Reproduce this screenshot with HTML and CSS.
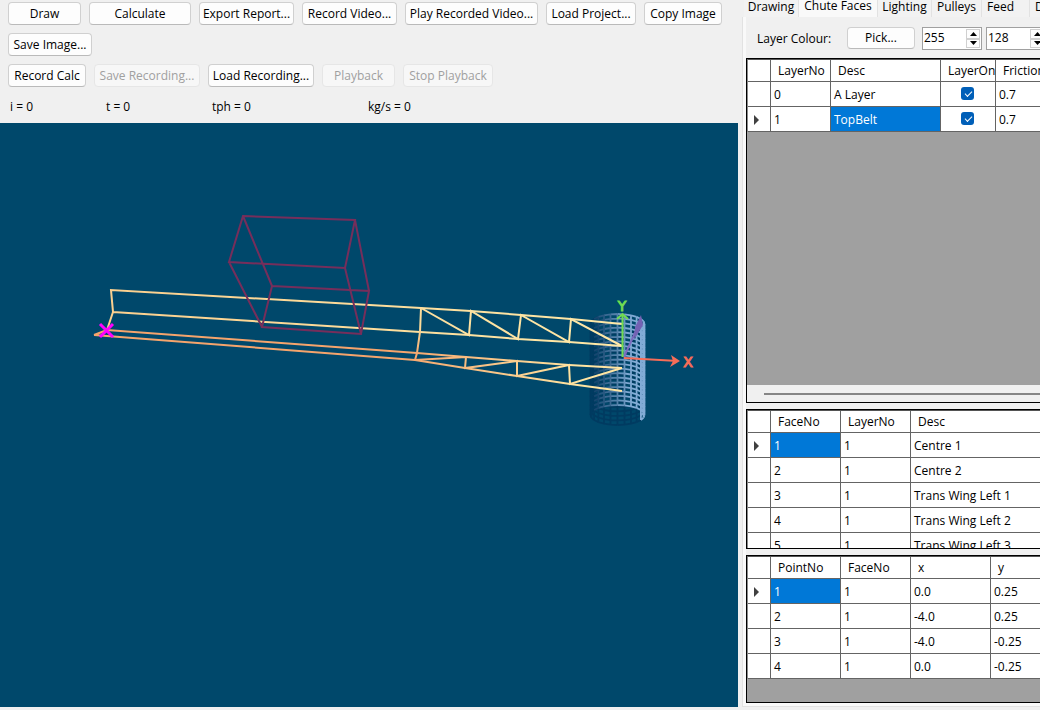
FILE: index.html
```
<!DOCTYPE html>
<html lang="en">
<head>
  <meta charset="UTF-8">
  <title>Chute Faces</title>
  <link rel="stylesheet" href="styles.css">
</head>
<body>
<main class="app">
  <section class="viewer">
    <div class="toolbar">
      <div class="row">
        <button class="btn w-draw" type="button">Draw</button>
        <button class="btn w-calculate" type="button">Calculate</button>
        <button class="btn w-wide" type="button">Export Report...</button>
        <button class="btn w-wide" type="button">Record Video...</button>
        <button class="btn w-play" type="button">Play Recorded Video...</button>
        <button class="btn w-load" type="button">Load Project...</button>
        <button class="btn w-copy" type="button">Copy Image</button>
        <button class="btn w-save" type="button">Save Image...</button>
      </div>
      <div class="row">
        <button class="btn w-copy" type="button">Record Calc</button>
        <button class="btn w-rec" type="button" disabled>Save Recording...</button>
        <button class="btn w-rec" type="button">Load Recording...</button>
        <button class="btn w-draw" type="button" disabled>Playback</button>
        <button class="btn w-load" type="button" disabled>Stop Playback</button>
      </div>
      <div class="stats">
        <span>i = 0</span>
        <span>t = 0</span>
        <span>tph = 0</span>
        <span>kg/s = 0</span>
      </div>
    </div>

    <div class="scene">
      <svg viewBox="0 123 738 584" preserveAspectRatio="xMinYMin meet" role="img" aria-label="3D view of the belt">
        <defs>
          <linearGradient id="upper" gradientUnits="userSpaceOnUse" x1="110" y1="0" x2="622" y2="0">
            <stop offset="0" stop-color="#fbd08f"/>
            <stop offset="1" stop-color="#ffe9a8"/>
          </linearGradient>
          <linearGradient id="lower" gradientUnits="userSpaceOnUse" x1="400" y1="0" x2="580" y2="0">
            <stop offset="0" stop-color="#f5a46c"/>
            <stop offset="1" stop-color="#ffe5a2"/>
          </linearGradient>
          <linearGradient id="edge" gradientUnits="userSpaceOnUse" x1="0" y1="325" x2="0" y2="358">
            <stop offset="0" stop-color="#fcdc9a"/>
            <stop offset="1" stop-color="#f5a46c"/>
          </linearGradient>
        </defs>

        <!-- pulley mesh, filled in by scene.js -->
        <g id="pulley" class="pulley"></g>

        <!-- belt -->
        <g class="line">
          <path stroke="url(#upper)" d="M107 330 113 312 111 290 421 308 471 311 521 315 571 319 622 324M113 312 420 332 469 335 518 339 569 342 622 346"/>
          <path stroke="url(#upper)" d="M421 308 469 335 471 311 518 339 521 315 569 342 571 319 622 346"/>
          <path stroke="url(#edge)" d="M421 308 420 332 417 353 415 360"/>
          <path stroke="url(#lower)" d="M94 335 107 330 417 353 466 357 517 361 569 365 622 368M94 335 415 360 465 368 517 376 570 384 622 391"/>
          <path stroke="url(#lower)" d="M415 360 466 357 465 368 517 361 517 376 569 365 570 384 622 368"/>
        </g>

        <!-- feed box -->
        <path class="line feed" d="M243 216 355 220 345 268 229 262ZM272 286 369 291 361 334 262 327ZM243 216 272 286M355 220 369 291M345 268 361 334M229 262 262 327"/>

        <!-- origin marker -->
        <path class="marker" d="M100 324 113 337M113 324 100 337"/>

        <!-- axes -->
        <path class="axis-z" d="M624 357 639 324"/>
        <path class="axis-z-head" d="M641 315 643 325 634 340 635 327Z"/>
        <path class="axis-y" d="M622.500 357V315M617 319 622.500 314 628 319"/>
        <path class="axis-x" d="M624 358 678 361"/>
        <path class="axis-x-head" d="M671 355 680 361 670 367 673 361Z"/>
        <text class="axis-name name-y" x="622" y="311">Y</text>
        <text class="axis-name name-x" x="688" y="367">X</text>
      </svg>
    </div>
  </section>

  <section class="side">
    <div class="tabs" role="tablist">
      <button class="tab t-drawing" type="button" role="tab">Drawing</button>
      <button class="tab t-faces active" type="button" role="tab" aria-selected="true">Chute Faces</button>
      <button class="tab t-lighting" type="button" role="tab">Lighting</button>
      <button class="tab t-short" type="button" role="tab">Pulleys</button>
      <button class="tab t-feed" type="button" role="tab">Feed</button>
      <button class="tab t-last" type="button" role="tab">D</button>
    </div>

    <div class="page">
      <div class="colour">
        <label class="colour-label" for="red">Layer Colour:</label>
        <button class="btn w-pick" type="button">Pick...</button>
        <div class="spin">
          <input id="red" type="text" value="255">
          <div class="arrows">
            <button type="button" aria-label="Red up"><svg viewBox="0 0 7 4"><path d="M0 4 3.500 0 7 4Z"/></svg></button>
            <button type="button" aria-label="Red down"><svg viewBox="0 0 7 4"><path d="M0 0 3.500 4 7 0Z"/></svg></button>
          </div>
        </div>
        <div class="spin">
          <input type="text" value="128" aria-label="Green">
          <div class="arrows">
            <button type="button" aria-label="Green up"><svg viewBox="0 0 7 4"><path d="M0 4 3.500 0 7 4Z"/></svg></button>
            <button type="button" aria-label="Green down"><svg viewBox="0 0 7 4"><path d="M0 0 3.500 4 7 0Z"/></svg></button>
          </div>
        </div>
      </div>

      <div class="box layers">
        <div class="grid-area">
          <table class="grid">
            <colgroup><col class="c-head"><col class="c-60"><col class="c-110"><col class="c-55"><col class="c-80"></colgroup>
            <thead>
              <tr><th></th><th>LayerNo</th><th>Desc</th><th>LayerOn</th><th>Friction</th></tr>
            </thead>
            <tbody>
              <tr><td></td><td>0</td><td>A Layer</td><td class="check"><input type="checkbox" checked aria-label="A Layer on"></td><td>0.7</td></tr>
              <tr class="current"><td></td><td>1</td><td class="selected">TopBelt</td><td class="check"><input type="checkbox" checked aria-label="TopBelt on"></td><td>0.7</td></tr>
            </tbody>
          </table>
        </div>
        <div class="scrollbar"><div class="thumb"></div></div>
      </div>

      <div class="box faces">
        <table class="grid">
          <colgroup><col class="c-head"><col class="c-70"><col class="c-70"><col class="c-200"></colgroup>
          <thead>
            <tr><th></th><th>FaceNo</th><th>LayerNo</th><th>Desc</th></tr>
          </thead>
          <tbody>
            <tr class="current"><td></td><td class="selected">1</td><td>1</td><td>Centre 1</td></tr>
            <tr><td></td><td>2</td><td>1</td><td>Centre 2</td></tr>
            <tr><td></td><td>3</td><td>1</td><td>Trans Wing Left 1</td></tr>
            <tr><td></td><td>4</td><td>1</td><td>Trans Wing Left 2</td></tr>
            <tr><td></td><td>5</td><td>1</td><td>Trans Wing Left 3</td></tr>
          </tbody>
        </table>
      </div>

      <div class="box points">
        <table class="grid">
          <colgroup><col class="c-head"><col class="c-70"><col class="c-70"><col class="c-80"><col class="c-80"></colgroup>
          <thead>
            <tr><th></th><th>PointNo</th><th>FaceNo</th><th>x</th><th>y</th></tr>
          </thead>
          <tbody>
            <tr class="current"><td></td><td class="selected">1</td><td>1</td><td>0.0</td><td>0.25</td></tr>
            <tr><td></td><td>2</td><td>1</td><td>-4.0</td><td>0.25</td></tr>
            <tr><td></td><td>3</td><td>1</td><td>-4.0</td><td>-0.25</td></tr>
            <tr><td></td><td>4</td><td>1</td><td>0.0</td><td>-0.25</td></tr>
          </tbody>
        </table>
      </div>
    </div>
  </section>
</main>
<script src="scene.js"></script>
</body>
</html>
```
FILE: styles.css
```
* {
  box-sizing: border-box;
}

body {
  margin: 0;
  background: #f0f0f0;
  color: #000;
  font: 12px/16px "Open Sans", "Noto Sans", sans-serif;
}

button,
input {
  font: inherit;
  color: inherit;
}

.app {
  display: flex;
  height: 100vh;
  overflow: hidden;
}

/* left part */
.viewer {
  flex: 1;
  min-width: 0;
  display: flex;
  flex-direction: column;
  padding-bottom: 3px;
}

.toolbar {
  padding: 2px 8px 8px;
}

.row {
  display: flex;
  flex-wrap: wrap;
  gap: 8px;
  margin-bottom: 8px;
}

.btn {
  flex: none;
  height: 23px;
  padding: 0;
  background: #fdfdfd;
  border: 1px solid #d0d0d0;
  border-bottom-color: #bababa;
  border-radius: 4px;
  line-height: 20px;
  white-space: nowrap;
}

.btn:disabled {
  background: #f7f7f7;
  border-color: #e6e6e6;
  color: #a0a0a0;
}

.w-draw { width: 73px; }
.w-calculate { width: 102px; }
.w-wide { width: 95px; }
.w-play { width: 133px; }
.w-load { width: 90px; }
.w-copy { width: 78px; }
.w-save { width: 84px; }
.w-rec { width: 106px; }
.w-pick { width: 68px; }

.stats {
  display: grid;
  grid-template-columns: 96px 106px 156px 1fr;
  padding: 4px 2px 0;
}

.scene {
  flex: 1;
  min-height: 0;
  background: #00486b;
}

.scene svg {
  display: block;
  width: 100%;
  height: 100%;
}

.line {
  fill: none;
  stroke-width: 2;
}

.pulley path {
  fill: none;
  stroke-width: 1.8;
}

.feed {
  stroke: #762e5b;
}

.marker {
  stroke: #ff00ff;
  stroke-width: 3;
}

.axis-x,
.axis-y,
.axis-z {
  fill: none;
  stroke-width: 2;
}

.axis-x { stroke: #f76d58; }
.axis-x-head { fill: #f76d58; }
.axis-y { stroke: #70dc52; }
.axis-z { stroke: #7c6bbd; }
.axis-z-head { fill: #7462b3; }

.axis-name {
  font: 14px "DejaVu Sans", sans-serif;
  stroke-width: 1;
  text-anchor: middle;
}

.name-x {
  fill: #f76d58;
  stroke: #f76d58;
}

.name-y {
  fill: #70dc52;
  stroke: #70dc52;
}

/* right part */
.side {
  flex: 0 0 302px;
  display: flex;
  flex-direction: column;
  min-width: 0;
  padding: 0 0 3px 4px;
  overflow: hidden;
}

.tabs {
  display: flex;
  flex: none;
  height: 17px;
  padding-left: 2px;
}

.tab {
  flex: none;
  padding: 0 0 3px;
  border: 0;
  border-right: 1px solid #e2e2e2;
  background: #f2f2f2;
  line-height: 14px;
  text-align: center;
  white-space: nowrap;
}

.tab.active {
  padding-bottom: 6px;
  background: #f9f9f9;
  line-height: 11px;
}

.t-drawing { width: 55px; }
.t-faces { width: 79px; }
.t-lighting { width: 54px; }
.t-short { width: 50px; }

.t-feed {
  width: 48px;
  padding-right: 10px;
}

.t-last {
  width: 55px;
  padding-left: 5px;
  text-align: left;
}

.page {
  flex: 1;
  display: flex;
  flex-direction: column;
  gap: 6px;
  min-height: 0;
  padding: 0 0 3px 3px;
  border-left: 1px solid #e2e2e2;
  border-bottom: 1px solid #e2e2e2;
  background: #f0f0f0;
  box-shadow: inset 3px -3px #f9f9f9;
}

.colour {
  display: flex;
  flex: none;
  align-items: flex-start;
  height: 35px;
  padding: 10px 0 0 11px;
}

.colour-label {
  flex: none;
  width: 90px;
  padding-top: 4px;
}

.colour .btn {
  height: 22px;
  margin-right: 7px;
}

.spin {
  display: flex;
  flex: none;
  width: 60px;
  height: 23px;
  margin-right: 4px;
  padding: 1px;
  background: #fff;
  border: 1px solid #a0a0a0;
}

.spin input {
  width: 42px;
  height: 17px;
  padding: 0;
  border: 0;
  outline: 0;
  background: none;
}

.arrows {
  display: flex;
  flex-direction: column;
  width: 14px;
}

.arrows button {
  display: flex;
  flex: 1;
  align-items: center;
  justify-content: center;
  padding: 0;
  background: #fdfdfd;
  border: 1px solid #d0d0d0;
}

.arrows svg {
  flex: none;
  width: 7px;
  height: 4px;
}

.box {
  flex: none;
  background: #a0a0a0;
  border: 1px solid #000;
  border-right: 0;
  overflow: hidden;
}

.layers {
  flex: 1;
  display: flex;
  flex-direction: column;
}

.grid-area {
  flex: 1;
}

.faces { height: 140px; }
.points { height: 148px; }

.scrollbar {
  height: 17px;
  padding: 8px 0 0 17px;
  background: #f0f0f0;
}

.thumb {
  height: 2px;
  background: #868686;
}

.grid {
  table-layout: fixed;
  width: 0;
  border-collapse: separate;
  border-spacing: 0;
  border-top: 1px solid #555;
  border-left: 1px solid #8a8a8a;
}

.c-head { width: 23px; }
.c-55 { width: 55px; }
.c-60 { width: 60px; }
.c-70 { width: 70px; }
.c-80 { width: 80px; }
.c-110 { width: 110px; }
.c-200 { width: 200px; }

.grid th,
.grid td {
  background: #fff;
  border-right: 1px solid #646464;
  border-bottom: 1px solid #646464;
  font-weight: normal;
  text-align: left;
  white-space: nowrap;
}

.grid th {
  height: 22px;
  padding: 0 0 0 7px;
}

.grid td {
  height: 25px;
  padding: 2px 0 0 3px;
}

.grid td.selected {
  background: #0078d7;
  color: #fff;
}

.grid td.check {
  padding: 0;
}

/* arrow in the header of the current row */
.current td:first-child::before {
  content: "";
  display: block;
  width: 0;
  margin-left: 3px;
  border: 5px solid transparent;
  border-left-color: #404040;
  border-right: 0;
}

.check input {
  display: block;
  appearance: none;
  width: 13px;
  height: 13px;
  margin: 0 auto 1px 20px;
  border-radius: 3px;
  background: #005fb8;
}

.check input:checked::before {
  content: "";
  display: block;
  width: 6px;
  height: 3px;
  margin: 4px 0 0 4px;
  border: solid #fff;
  border-width: 0 0 1px 1px;
  transform: rotate(-45deg);
}
```
FILE: scene.js
```
const NS = "http://www.w3.org/2000/svg";
const pulley = document.getElementById("pulley");

const centre = 617.5;
const top0 = 324;
const height = 91;
const rx = 27;
const ry = 10;
const rows = 20;
const step = 15;

function point(angle, row) {
  const a = (angle * Math.PI) / 180;
  const x = centre + rx * Math.cos(a);
  const y = top0 + (height * row) / rows - ry * Math.sin(a);
  return x.toFixed(1) + " " + y.toFixed(1);
}

function shade(angle) {
  const c = Math.cos((angle * Math.PI) / 180);
  const t = Math.min(1, Math.max(0, (c + 0.85) / 1.4));
  const dark = [10, 60, 100];
  const light = [130, 172, 214];
  return "rgb(" + dark.map((d, i) => Math.round(d + (light[i] - d) * t)) + ")";
}

function draw(d, stroke) {
  const path = document.createElementNS(NS, "path");
  path.setAttribute("d", d);
  path.setAttribute("stroke", stroke);
  pulley.appendChild(path);
}

function wall(from, to, colour) {
  for (let a = from; a < to; a += step) {
    let d = "M" + point(a, 0) + "L" + point(a, rows);
    for (let r = 0; r <= rows; r++) {
      d += "M" + point(a, r) + "L" + point(a + step, r);
    }
    draw(d, colour(a));
  }
}

// unlit front first, then the lit inside of the shell
wall(135, 330, () => "#003b61");
wall(-30, 150, shade);
```
